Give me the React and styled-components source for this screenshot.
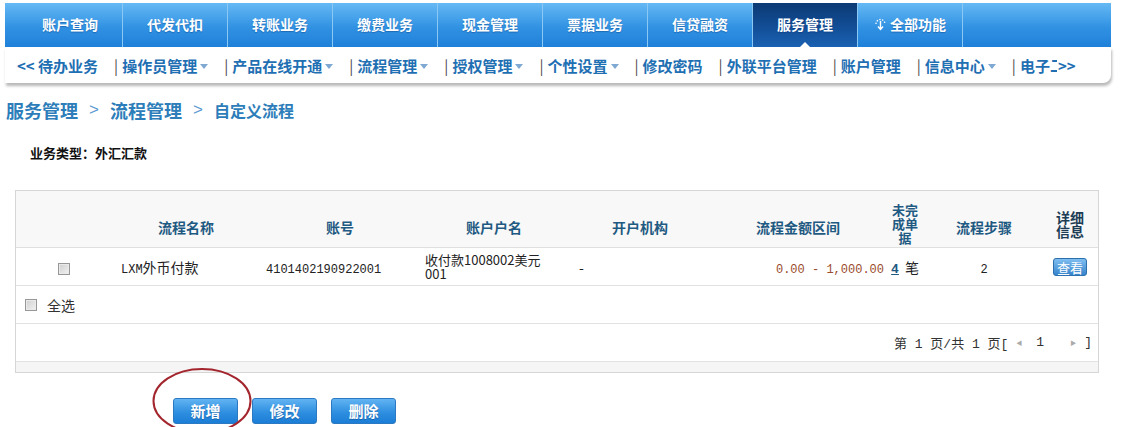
import React from 'react'
import styled, { createGlobalStyle } from 'styled-components'

const GlobalStyle = createGlobalStyle`
  body {
    margin: 0;
    background: #fff;
    font-family: "Noto Sans CJK SC", "Liberation Sans", sans-serif;
  }
`

const Page = styled.div`
  position: relative;
  width: 1133px;
  height: 427px;
  overflow: hidden;
  padding-top: 3px;
  box-sizing: border-box;
`

const TopNav = styled.nav`
  margin-left: 5px;
  width: 1106px;
  height: 44px;
  display: flex;
  padding-left: 13px;
  box-sizing: border-box;
  background: linear-gradient(#66b9f4, #3192e3 55%, #1f80d9);
`

const Tab = styled.div`
  position: relative;
  width: 105px;
  display: flex;
  align-items: center;
  justify-content: center;
  gap: 3px;
  padding-bottom: 3px;
  box-sizing: border-box;
  border-right: 1px solid #8cc8f4;
  color: #fff;
  font-size: 14px;
  font-weight: bold;
  text-shadow: 0 1px 1px rgba(0, 40, 100, 0.35);
  background: ${p => (p.$active ? 'linear-gradient(#0c3a74, #13509a 60%, #1b62b2)' : 'transparent')};

  &::after {
    content: '';
    display: ${p => (p.$active ? 'block' : 'none')};
    position: absolute;
    left: 50%;
    bottom: 0;
    margin-left: -5px;
    border: 5px solid transparent;
    border-bottom-color: #fff;
    border-top: 0;
  }
`

const SubNav = styled.div`
  margin-left: 5px;
  width: 1106px;
  height: 36px;
  display: flex;
  align-items: center;
  gap: 16px;
  padding-left: 12px;
  box-sizing: border-box;
  background: #fff;
  border-radius: 0 0 8px 0;
  box-shadow: 1px 3px 3px rgba(0, 0, 0, 0.28);
  color: #1f6fb3;
  font-size: 15px;
  font-weight: bold;
  white-space: nowrap;
`

const SubItem = styled.span`
  display: inline-flex;
  align-items: center;

  &::before {
    content: '|';
    display: ${p => (p.$sep ? 'inline' : 'none')};
    color: #4d4d4d;
    font-weight: normal;
    margin-right: 4px;
  }

  &::after {
    content: '';
    display: ${p => (p.$drop ? 'block' : 'none')};
    margin: 2px 0 0 3px;
    border: 4px solid transparent;
    border-top: 5px solid #7fa9d2;
    border-bottom: 0;
  }
`

const Clip = styled.span`
  display: inline-block;
  width: 7px;
  height: 20px;
  line-height: 20px;
  overflow: hidden;
  margin-right: 1px;
`

const Crumbs = styled.div`
  margin: 14px 0 0 6px;
  height: 26px;
  display: flex;
  align-items: center;
  gap: 11px;
  color: #2c7db9;
`

const Crumb = styled.span`
  font-size: ${p => (p.$small ? '16px' : '18px')};
  font-weight: bold;
`

const Chevron = styled.span`
  font-family: "Liberation Sans", sans-serif;
  font-size: 17px;
  font-weight: normal;
  color: #5a9ad0;
`

const Info = styled.div`
  margin: 20px 0 0 30px;
  height: 20px;
  line-height: 20px;
  font-size: 13px;
  font-weight: bold;
  color: #111;
`

const Panel = styled.div`
  margin: 27px 0 0 15px;
  width: 1084px;
  border: 1px solid #d6d6d6;
  box-sizing: border-box;
`

const Table = styled.table`
  width: 100%;
  border-collapse: collapse;
  table-layout: fixed;
`

const Th = styled.th`
  height: 36px;
  padding: ${p => (p.$multi ? '12px' : '18px')} 0 2px;
  background: #f8f8f8;
  border-bottom: 1px solid #e0e0e0;
  color: ${p => (p.$dark ? '#1d3d55' : '#1f5a82')};
  font-size: ${p => (p.$narrow ? '13px' : '14px')};
  line-height: 14px;
  font-weight: bold;
  vertical-align: middle;
  text-align: center;
`

const Td = styled.td`
  height: 37px;
  padding: 0 0 0 ${p => p.$pad || 0}px;
  border-bottom: 1px solid #e2e2e2;
  font-size: 14px;
  color: #222;
  text-align: ${p => p.$align || 'left'};
  vertical-align: middle;
  white-space: ${p => (p.$nowrap ? 'nowrap' : 'normal')};
`

const Mono = styled.span`
  font-family: "Liberation Mono", monospace;
  font-size: 12px;
  color: ${p => p.$color || 'inherit'};
`

const TwoLine = styled.div`
  line-height: 14px;
  font-size: 13px;
`

const Count = styled.span`
  font-family: "Liberation Mono", monospace;
  font-weight: bold;
  font-size: 13px;
  color: #1f5a82;
  text-decoration: underline;
  margin-right: 6px;
`

const SmallBtn = styled.span`
  display: inline-flex;
  align-items: center;
  justify-content: center;
  width: 34px;
  height: 18px;
  box-sizing: border-box;
  border: 1px solid #2c6fae;
  border-radius: 3px;
  background: linear-gradient(#7fbef0, #3784cc);
  color: #fff;
  font-size: 13px;
`

const Box = styled.span`
  display: inline-block;
  width: 12px;
  height: 12px;
  box-sizing: border-box;
  border: 1px solid #979797;
  background: linear-gradient(135deg, #cfcfcf, #f2f2f2);
  box-shadow: inset 0 0 0 1px #eaeaea;
  vertical-align: middle;
`

const Row = styled.div`
  height: 37px;
  display: flex;
  align-items: center;
  justify-content: ${p => (p.$right ? 'flex-end' : 'flex-start')};
  gap: 10px;
  padding: 0 6px 0 9px;
  border-bottom: 1px solid #e2e2e2;
  font-size: 14px;
  color: #333;
`

const Pager = styled.span`
  display: flex;
  align-items: center;
  font-family: "Liberation Mono", "Noto Sans CJK SC", monospace;
  font-size: 13px;
  color: #333;
  white-space: pre;
`

const Arrow = styled.span`
  font-size: 6px;
  color: #aaa;
  margin: 0 ${p => p.$r || 0}px 0 ${p => p.$l || 0}px;
`

const Strip = styled.div`
  height: 10px;
  background: #f5f5f5;
`

const Actions = styled.div`
  margin: 25px 0 0 173px;
  display: flex;
  gap: 14px;
`

const Button = styled.button`
  width: 65px;
  height: 26px;
  padding: 0;
  border: 1px solid #2a79c2;
  border-radius: 3px;
  background: linear-gradient(#62b4f2, #2f8fe0 55%, #1b7dd6);
  color: #fff;
  font-family: "Noto Sans CJK SC", sans-serif;
  font-size: 15px;
  font-weight: bold;
  line-height: 24px;
  text-shadow: 0 1px 1px rgba(0, 40, 100, 0.4);
`

const Mark = styled.svg`
  position: absolute;
  left: 150px;
  top: 366px;
`

const tabs = ['账户查询', '代发代扣', '转账业务', '缴费业务', '现金管理', '票据业务', '信贷融资']

const subs = [
  { t: '操作员管理', d: true },
  { t: '产品在线开通', d: true },
  { t: '流程管理', d: true },
  { t: '授权管理', d: true },
  { t: '个性设置', d: true },
  { t: '修改密码' },
  { t: '外联平台管理' },
  { t: '账户管理' },
  { t: '信息中心', d: true },
]

const AllIcon = () => (
  <svg width="13" height="14" viewBox="0 0 13 14">
    <path d="M2 7 A4.5 4.5 0 0 1 11 7" fill="none" stroke="#fff" strokeWidth="1.3" strokeDasharray="1.4 1.4" />
    <path d="M6.5 4 V12 M4 9.5 L6.5 12.5 L9 9.5" fill="none" stroke="#fff" strokeWidth="1.4" />
  </svg>
)

export default function App() {
  return (
    <Page>
      <GlobalStyle />
      <TopNav>
        {tabs.map(t => (
          <Tab key={t}>{t}</Tab>
        ))}
        <Tab $active>服务管理</Tab>
        <Tab>
          <AllIcon />
          全部功能
        </Tab>
      </TopNav>

      <SubNav>
        <SubItem>&lt;&lt; 待办业务</SubItem>
        {subs.map(s => (
          <SubItem key={s.t} $sep $drop={s.d}>
            {s.t}
          </SubItem>
        ))}
        <SubItem $sep>
          电子<Clip>二</Clip>&gt;&gt;
        </SubItem>
      </SubNav>

      <Crumbs>
        <Crumb>服务管理</Crumb>
        <Chevron>&gt;</Chevron>
        <Crumb>流程管理</Crumb>
        <Chevron>&gt;</Chevron>
        <Crumb $small>自定义流程</Crumb>
      </Crumbs>

      <Info>业务类型：外汇汇款</Info>

      <Panel>
        <Table>
          <colgroup>
            <col style={{ width: 96 }} />
            <col style={{ width: 148 }} />
            <col style={{ width: 160 }} />
            <col style={{ width: 148 }} />
            <col style={{ width: 144 }} />
            <col style={{ width: 172 }} />
            <col style={{ width: 42 }} />
            <col style={{ width: 116 }} />
            <col style={{ width: 56 }} />
          </colgroup>
          <thead>
            <tr>
              <Th />
              <Th>流程名称</Th>
              <Th>账号</Th>
              <Th>账户户名</Th>
              <Th>开户机构</Th>
              <Th>流程金额区间</Th>
              <Th $narrow $multi>未完<br />成单<br />据</Th>
              <Th>流程步骤</Th>
              <Th $dark $multi>详细<br />信息</Th>
            </tr>
          </thead>
          <tbody>
            <tr>
              <Td $align="center"><Box /></Td>
              <Td $pad={9}><Mono>LXM</Mono>外币付款</Td>
              <Td $pad={6}><Mono>4101402190922001</Mono></Td>
              <Td $pad={5}>
                <TwoLine>收付款1008002美元<br />001</TwoLine>
              </Td>
              <Td $pad={11}>-</Td>
              <Td $align="right"><Mono $color="#9a4b2c">0.00 - 1,000.00</Mono></Td>
              <Td $align="center" $nowrap><Count>4</Count>笔</Td>
              <Td $align="center"><Mono>2</Mono></Td>
              <Td $align="center"><SmallBtn>查看</SmallBtn></Td>
            </tr>
          </tbody>
        </Table>
        <Row>
          <Box />
          <span>全选</span>
        </Row>
        <Row $right>
          <Pager>
            第 1 页/共 1 页[<Arrow $l={8} $r={14}>◀</Arrow>1<Arrow $l={26} $r={8}>▶</Arrow>]
          </Pager>
        </Row>
        <Strip />
      </Panel>

      <Actions>
        <Button>新增</Button>
        <Button>修改</Button>
        <Button>删除</Button>
      </Actions>

      <Mark width="106" height="80" viewBox="0 0 106 80">
        <ellipse cx="52" cy="35" rx="48.5" ry="32" fill="none" stroke="#a3262e" strokeWidth="2" />
      </Mark>
    </Page>
  )
}
